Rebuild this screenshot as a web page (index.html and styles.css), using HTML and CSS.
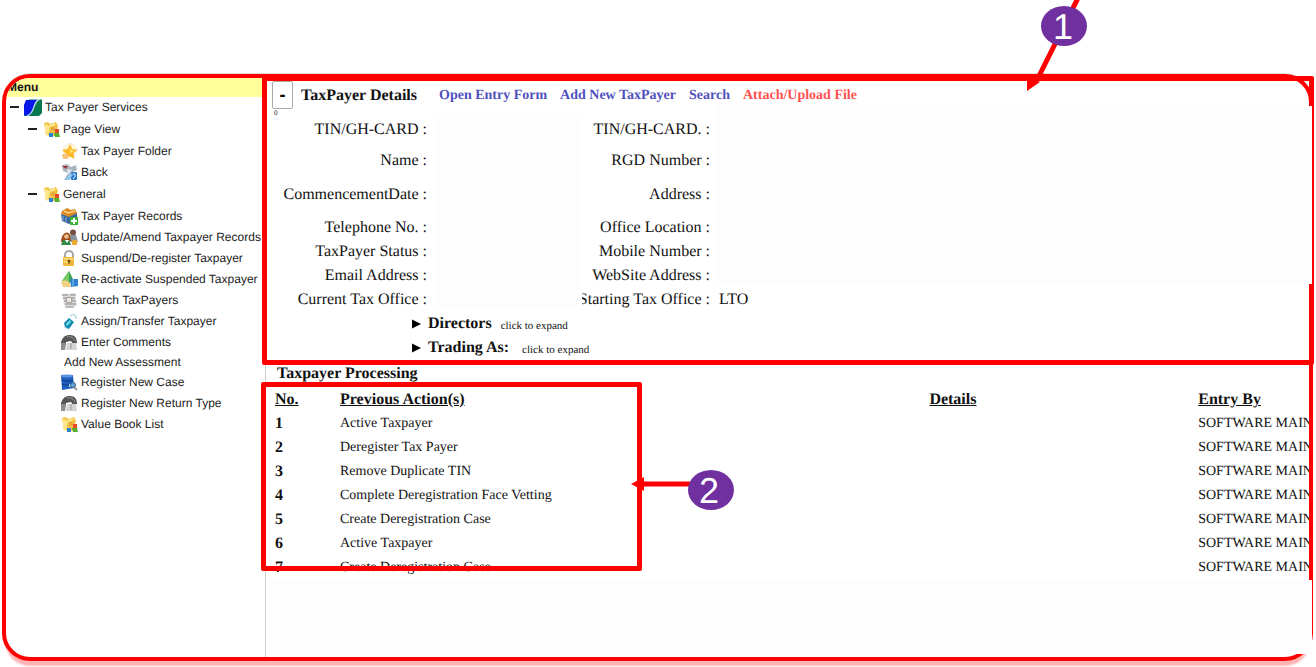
FILE: index.html
```html
<!DOCTYPE html>
<html lang="en">
<head>
<meta charset="utf-8">
<title>Tax Payer Services</title>
<link rel="stylesheet" href="styles.css">
</head>
<body>
<svg class="defs" aria-hidden="true">
  <symbol id="i-logo" viewBox="0 0 18 18"><path d="M2 2 5 .500H18V14L15 17H0V7Z" fill="#08784f"/><path d="M2 1H15C8 3 12 14 4 17L0 16V6Z" fill="#0818e8"/><path d="M16 0C8 2 12 14 3 17" fill="none" stroke="#bfe6ee" stroke-width="1.300"/></symbol>
  <symbol id="i-folder" viewBox="0 0 17 17"><path d="M1 2 5 1 7 3 13 1 15 5 12 15 3 14Z" fill="#f3c545"/><path d="M2 3 7 5 5 15 2 13Z" fill="#ffe58b"/><path d="M7 5 12 3" stroke="#fff2ae" stroke-width="1.500"/><circle cx="10" cy="8" r="2" fill="#e9a13a"/><path d="M12 8h4v4h-4z" fill="#e84a26"/><path d="M6 12h4v4H6z" fill="#2d7fd8"/><path d="m11 12 5 0 1 4-5 0z" fill="#58b030"/></symbol>
  <symbol id="i-star" viewBox="0 0 17 17"><circle cx="9" cy="7" r="6.500" fill="#fff9dd" stroke="#e4dfcf" stroke-width=".5"/><path d="m9 1 2.300 5 5.200.7-4 3.600 1 5.700-4.700-2.500L4 16l.8-5.500L1 7l5.500-1Z" fill="#fbb92a"/><path d="m9 3 1 4 4 1-5 2Z" fill="#ffe06b"/><path d="M1 11h6v5H2Z" fill="#f7c27e"/></symbol>
  <symbol id="i-back" viewBox="0 0 17 17"><path d="M1 1 6 0 10 3 15 1 16 6 12 8 14 11 8 16 3 16 7 9 2 7Z" fill="#a9b5bf"/><path d="m1 2 6 0-2 3Z" fill="#9b3038"/><path d="m6 5 5 1-4 5Z" fill="#e1e8ec"/><rect x="10" y="8" width="6" height="8" rx="1" fill="#2879c8"/><path d="M4 15 9 9l3 2-4 5Z" fill="#8fc6ec"/><path d="M12 10h2v3l-2 2" fill="none" stroke="#d9f0ff"/></symbol>
  <symbol id="i-box" viewBox="0 0 17 17"><path d="M0 6 8 8 16 5V12L8 16 1 13Z" fill="#38659b"/><path d="M1 3 6 0l4 2 4-1 2 4-8 4-8-3Z" fill="#d98a24"/><path d="m3 3 4 2 7-2" stroke="#ffd278" stroke-width="1.500" fill="none"/><path d="M2 8v5M5 9v5" stroke="#8db4de"/><path d="M9 9h8v8H9z" fill="#35b535"/><path d="M13 10v6M10 13h6" stroke="#fff" stroke-width="2"/></symbol>
  <symbol id="i-people" viewBox="0 0 17 17"><circle cx="12" cy="3.500" r="3" fill="#765043"/><path d="M9 6h6l2 7H9Z" fill="#8c939d"/><path d="M0 13C0 4 7 1 9 6l1 6Z" fill="#99501d"/><circle cx="5.500" cy="7.500" r="2.300" fill="#f2bd89"/><path d="M0 16 2 11h6l2 5Z" fill="#318b48"/><path d="m4 11 2 3 2-3" fill="#fff"/><rect x="11" y="11" width="5" height="5" rx="1" fill="#eba832"/></symbol>
  <symbol id="i-lock" viewBox="0 0 17 17"><path d="M4 8V5a3.500 3.500 0 0 1 8 0v3" fill="none" stroke="#a5a5a5" stroke-width="2"/><rect x="2" y="7" width="11" height="9" rx="1" fill="#f0b83c"/><path d="M3 9h9M3 12h4" stroke="#ffe38b" stroke-width="1.500"/><circle cx="8" cy="11" r="1.500" fill="#725014"/><path d="M8 11v3" stroke="#725014"/></symbol>
  <symbol id="i-react" viewBox="0 0 17 17"><path d="M8 0 13 10 8 12 1 10Z" fill="#36a34b"/><path d="M8 0v12L1 10Z" fill="#79ca62"/><path d="M9 8h8v7l-7 1Z" fill="#2f83ce"/><path d="m12 8 0 8" stroke="#86c8f2"/><path d="M0 11c5-3 9-1 10 5H2Z" fill="#f4d285"/></symbol>
  <symbol id="i-search" viewBox="0 0 17 17"><path d="M1 2 14 1 16 14 4 16Z" fill="#dedede"/><path d="M1 3h6M9 3h6M2 6h12M3 9h4M10 9h5M4 12h11M5 15h8" stroke="#888" stroke-width="1"/><circle cx="8" cy="8" r="3" fill="#ece7df" stroke="#99958f"/></symbol>
  <symbol id="i-transfer" viewBox="0 0 17 17"><path d="M9 3C12 0 16 2 15 6" fill="none" stroke="#b8d8e5" stroke-width="1.500"/><path d="M3 10 8 5l5 4-5 7-4-2Z" fill="#118caf"/><path d="m5 11 4-4 1 2-4 4Z" fill="#7bdced"/><path d="m3 14 5 3" stroke="#c9d9df"/></symbol>
  <symbol id="i-phone" viewBox="0 0 17 17"><path d="M0 8C2 2 5 1 9 1c5 0 7 3 7 8l-4 1-2-3-5 1-1 8H1Z" fill="#565656"/><path d="M6 9h9l1 7H5Z" fill="#d4d4d4"/><path d="M0 9h4v7H0Z" fill="#8e8e8e"/><path d="M6 3c4-1 7 1 8 4M10 9v6" stroke="#999" fill="none"/></symbol>
  <symbol id="i-db" viewBox="0 0 17 17"><path d="M0 1h12l1 13-12 2Z" fill="#1d5dbb"/><ellipse cx="6" cy="2" rx="6" ry="1.600" fill="#5795e3"/><path d="M1 6c4 2 8 1 11 0M1 10c4 2 8 1 11 0" stroke="#09367f" fill="none"/><path d="M8 10h5v3H8z" fill="#b5d9f3"/><circle cx="12" cy="11" r="2.500" fill="#69a9dd" stroke="#315b85"/><path d="m13 13 3 3" stroke="#777" stroke-width="1.500"/></symbol>
</svg>

<div class="app">
  <nav class="sidebar" aria-label="Menu">
    <h2 class="menu-title">Menu</h2>
    <div class="row root"><button class="toggle" aria-label="Collapse Tax Payer Services"></button><svg class="icon logo"><use href="#i-logo"/></svg><a href="#">Tax Payer Services</a></div>
    <div class="row group"><button class="toggle" aria-label="Collapse Page View"></button><svg class="icon"><use href="#i-folder"/></svg><a href="#">Page View</a></div>
    <ul class="leaves">
      <li class="row"><svg class="icon"><use href="#i-star"/></svg><a href="#">Tax Payer Folder</a></li>
      <li class="row"><svg class="icon"><use href="#i-back"/></svg><a href="#">Back</a></li>
    </ul>
    <div class="row group"><button class="toggle" aria-label="Collapse General"></button><svg class="icon"><use href="#i-folder"/></svg><a href="#">General</a></div>
    <ul class="leaves">
      <li class="row"><svg class="icon"><use href="#i-box"/></svg><a href="#">Tax Payer Records</a></li>
      <li class="row"><svg class="icon"><use href="#i-people"/></svg><a href="#">Update/Amend Taxpayer Records</a></li>
      <li class="row"><svg class="icon"><use href="#i-lock"/></svg><a href="#">Suspend/De-register Taxpayer</a></li>
      <li class="row"><svg class="icon"><use href="#i-react"/></svg><a href="#">Re-activate Suspended Taxpayer</a></li>
      <li class="row"><svg class="icon"><use href="#i-search"/></svg><a href="#">Search TaxPayers</a></li>
      <li class="row"><svg class="icon"><use href="#i-transfer"/></svg><a href="#">Assign/Transfer Taxpayer</a></li>
      <li class="row"><svg class="icon"><use href="#i-phone"/></svg><a href="#">Enter Comments</a></li>
      <li class="row plain"><a href="#">Add New Assessment</a></li>
      <li class="row"><svg class="icon"><use href="#i-db"/></svg><a href="#">Register New Case</a></li>
      <li class="row"><svg class="icon"><use href="#i-phone"/></svg><a href="#">Register New Return Type</a></li>
      <li class="row"><svg class="icon"><use href="#i-folder"/></svg><a href="#">Value Book List</a></li>
    </ul>
  </nav>

  <main class="main">
    <section class="details">
      <div class="outline details-outline"></div>
      <header class="details-head">
        <div class="fold"><button class="fold-button" aria-label="Collapse details">-</button><span class="tiny">0</span></div>
        <h1>TaxPayer Details</h1>
        <a href="#">Open Entry Form</a>
        <a href="#">Add New TaxPayer</a>
        <a href="#">Search</a>
        <a href="#" class="attach">Attach/Upload File</a>
      </header>
      <div class="fields">
        <div class="mask mask-left"></div>
        <div class="mask mask-right"></div>
        <span class="label">TIN/GH-CARD :</span><span class="label second">TIN/GH-CARD. :</span>
        <span class="label">Name :</span><span class="label second">RGD Number :</span>
        <span class="label">CommencementDate :</span><span class="label second">Address :</span>
        <span class="label">Telephone No. :</span><span class="label second">Office Location :</span>
        <span class="label">TaxPayer Status :</span><span class="label second">Mobile Number :</span>
        <span class="label">Email Address :</span><span class="label second">WebSite Address :</span>
        <span class="label">Current Tax Office :</span><span class="label second">Starting Tax Office :</span><span class="value">LTO</span>
      </div>
      <details class="expander"><summary><svg class="tri" viewBox="0 0 10 10"><path d="M0 0 10 5 0 10Z"/></svg><b>Directors</b><small>click to expand</small></summary></details>
      <details class="expander wide"><summary><svg class="tri" viewBox="0 0 10 10"><path d="M0 0 10 5 0 10Z"/></svg><b>Trading As:</b><small>click to expand</small></summary></details>
    </section>

    <section class="processing">
      <h2>Taxpayer Processing</h2>
      <div class="outline table-outline"></div>
      <table class="actions">
        <thead><tr><th class="no">No.</th><th class="action">Previous Action(s)</th><th class="info">Details</th><th>Entry By</th></tr></thead>
        <tbody>
          <tr><th>1</th><td>Active Taxpayer</td><td></td><td>SOFTWARE MAIN</td></tr>
          <tr><th>2</th><td>Deregister Tax Payer</td><td></td><td>SOFTWARE MAIN</td></tr>
          <tr><th>3</th><td>Remove Duplicate TIN</td><td></td><td>SOFTWARE MAIN</td></tr>
          <tr><th>4</th><td>Complete Deregistration Face Vetting</td><td></td><td>SOFTWARE MAIN</td></tr>
          <tr><th>5</th><td>Create Deregistration Case</td><td></td><td>SOFTWARE MAIN</td></tr>
          <tr><th>6</th><td>Active Taxpayer</td><td></td><td>SOFTWARE MAIN</td></tr>
          <tr><th>7</th><td>Create Deregistration Case</td><td></td><td>SOFTWARE MAIN</td></tr>
        </tbody>
      </table>
      <svg class="callout two" viewBox="0 0 106 42"><path d="M10 15H60" stroke="#f00" stroke-width="5"/><path d="M1 15 14 8V22Z" fill="#f00"/><ellipse cx="81" cy="21" rx="23" ry="20" fill="#7030a0"/><text x="79" y="34">2</text></svg>
    </section>
    <div class="blank"></div>
  </main>
</div>

<svg class="callout one" viewBox="0 0 70 94"><path d="M54-4 12 80" stroke="#f00" stroke-width="5"/><path d="M2 91V75L15 82Z" fill="#f00"/><ellipse cx="39" cy="26" rx="23" ry="20" fill="#7030a0"/><text x="38" y="39">1</text></svg>
</body>
</html>
```
FILE: styles.css
```css
* { box-sizing: border-box; }
body {
  margin: 0;
  min-height: 100vh;
  padding: 74px 3px 6px 2px;
  position: relative;
  overflow: hidden;
  background: #fff;
  color: #111;
  font-family: "Liberation Serif", "Times New Roman", serif;
  text-rendering: geometricPrecision;
}
.defs { position: absolute; width: 0; height: 0; }
a { color: inherit; text-decoration: none; }
h1, h2 { margin: 0; }

.app {
  display: flex;
  position: relative;
  min-height: calc(100vh - 80px);
  border: 4px solid #f00;
  border-radius: 28px;
  box-shadow: 0 -1px 0 #ddd, 0 8px 2px -3px #ffb4b4;
}

/* Menu tree */
.sidebar {
  flex: none;
  width: 260px;
  border-right: 1px solid #ccc;
  border-radius: 24px 0 0 24px;
  overflow: hidden;
  font: 12px/20px "Liberation Sans", Arial, sans-serif;
  color: #222;
}
.menu-title {
  height: 19px;
  padding-left: 1px;
  background: #ffff9c;
  font-size: 12px;
  line-height: 19px;
  color: #111;
}
.row { display: flex; align-items: center; height: 21px; white-space: nowrap; }
.leaves { list-style: none; margin: 0; padding: 0 0 0 55px; }
.icon { flex: none; width: 17px; height: 17px; margin: 2px 3px 0 0; }
.logo { width: 18px; height: 18px; }
.row.root { height: 20px; padding-left: 4px; }
.row.group { height: 23px; padding-left: 22px; }
.row.plain { height: 19px; padding-left: 3px; }
.toggle {
  flex: none;
  width: 9px;
  height: 2px;
  margin-right: 5px;
  padding: 0;
  border: 0;
  background: #222;
}
.group .toggle { margin-right: 6px; }

.main { flex: 1; min-width: 0; display: flex; flex-direction: column; }
.outline { position: absolute; border: 5px solid #f00; border-radius: 2px; pointer-events: none; z-index: 1; }

/* Taxpayer details */
.details { position: relative; }
.details-outline { inset: -2px -5px -5px -4px; }
.details-head { display: flex; align-items: center; height: 34px; padding-left: 6px; }
.details-head h1 { margin: 2px 22px 0 8px; font-size: 16px; line-height: 20px; }
.details-head a { margin: 2px 13px 0 0; font-weight: bold; font-size: 14px; color: #5050bd; }
.details-head a.attach { color: #ff5050; }
.fold { position: relative; display: flex; }
.fold-button {
  width: 21px;
  height: 28px;
  padding: 0;
  border: 1px solid #aaa;
  border-radius: 2px;
  background: #fff;
  font: bold 18px "Liberation Sans", Arial, sans-serif;
}
.tiny { position: absolute; left: 2px; top: 28px; font-size: 7px; line-height: 8px; }
.fields {
  position: relative;
  display: grid;
  grid-template-columns: 161px 283px 1fr;
  grid-template-rows: 36px 26px 42px repeat(4, 24px);
  align-items: center;
  font-size: 16px;
  white-space: nowrap;
}
.label { grid-column: 1; text-align: right; }
.label.second { grid-column: 2; }
.value { padding-left: 9px; }
.mask { position: absolute; z-index: 2; background: #fdfdfd; }
.mask-left { left: 168px; top: 2px; width: 148px; bottom: 4px; }
.mask-right { left: 449px; top: -6px; right: -3px; bottom: 28px; }

.expander summary { display: flex; align-items: center; height: 24px; padding-left: 146px; list-style: none; }
.expander b { font-size: 16px; }
.expander small { margin: 3px 0 0 9px; font-size: 11px; }
.expander.wide small { margin-left: 13px; }
.tri { width: 9px; height: 10px; margin-right: 7px; }

/* Action history */
.processing { position: relative; padding: 2px 0 0 9px; }
.processing::after {
  content: "";
  position: absolute;
  top: 0;
  right: -4px;
  bottom: 0;
  width: 4px;
  background: #f00;
}
.processing h2 { padding-left: 2px; font-size: 16px; line-height: 24px; }
.table-outline { left: -5px; top: 22px; width: 381px; bottom: 9px; }
.actions { width: 100%; margin-top: 2px; table-layout: fixed; border-collapse: collapse; font-size: 14px; }
.actions th, .actions td { height: 24px; padding: 0; text-align: left; white-space: nowrap; }
.actions th { font-size: 16px; }
.actions thead th { text-decoration: underline; }
.actions .no { width: 65px; }
.actions .action { width: 57%; }
.actions .info { width: 26%; }
.blank { position: relative; z-index: 2; flex: 1; min-height: 40px; margin: 0 -3px 3px 7px; background: #fdfdfd; }

/* Numbered callouts */
.callout { position: absolute; z-index: 3; }
.callout text { fill: #fff; font: 36px "Liberation Sans", Arial, sans-serif; text-anchor: middle; }
.one { top: 0; right: 221px; width: 70px; height: 94px; }
.two { left: 364px; top: 109px; width: 106px; height: 42px; }
```
